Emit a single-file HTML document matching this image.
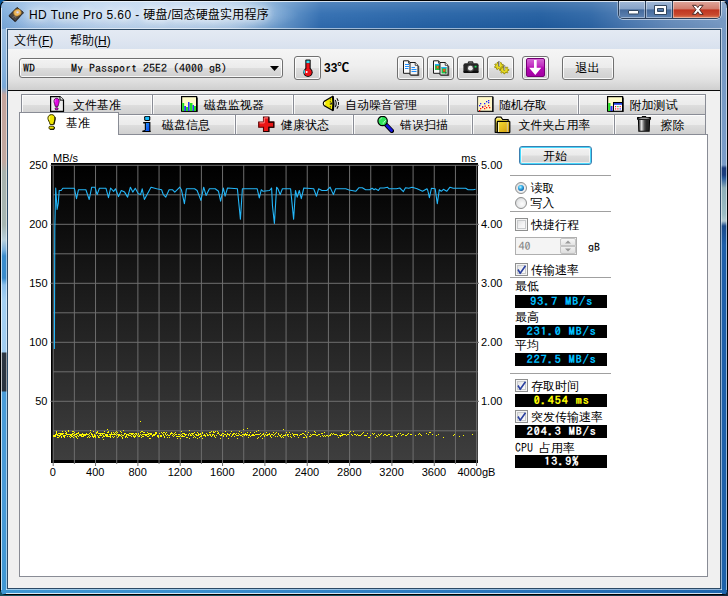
<!DOCTYPE html>
<html lang="zh-CN">
<head>
<meta charset="utf-8">
<title>HD Tune Pro 5.60 - 硬盘/固态硬盘实用程序</title>
<style>
*{box-sizing:border-box;margin:0;padding:0}
html,body{width:728px;height:596px;overflow:hidden}
body{position:relative;background:linear-gradient(90deg,#17505f 0,#17505f 60%,#14283c 100%);font-family:"Liberation Sans","Noto Sans CJK SC",sans-serif;font-size:12px;color:#000}
.abs{position:absolute}
#win{position:absolute;left:0;top:0;width:728px;height:595px;border-radius:7px 7px 6px 6px;overflow:hidden;background:#000}
/* frame glass pieces */
#ftop{position:absolute;left:1px;top:1px;width:726px;height:28px;border-radius:6px 6px 0 0;
 background:
  linear-gradient(90deg,rgba(200,222,244,0) 0,rgba(200,222,244,0) 100%),
  linear-gradient(90deg,#7aaadb 0,#98bde5 28px,#b0cdec 110px,#a9c8e8 230px,#6f9fd0 275px,#2f6cb0 320px,#2462a6 430px,#1f5c9f 540px,#2c65a5 590px,#4878b1 625px,#668dbc 670px,#7a9cc6 726px)}
#ftop:before{content:"";position:absolute;left:0;top:0;right:0;height:1px;background:rgba(255,255,255,.75)}
#ftopshade{position:absolute;left:1px;top:1px;width:726px;height:28px;border-radius:6px 6px 0 0;background:linear-gradient(180deg,rgba(255,255,255,.18) 0,rgba(255,255,255,.05) 45%,rgba(0,20,60,.06) 100%)}
#fleft{position:absolute;left:1px;top:29px;width:7px;height:559px;
 background:linear-gradient(180deg,#9dbfe2 0,#86b1dc 40px,#78a8d8 58px,#c4a49c 66px,#c0a8a0 133px,#a8b2ae 143px,#a6b6b2 196px,#b8d0dc 211px,#7ab0dc 221px,#3a8ccc 227px,#3a8ccc 249px,#8cc0ec 256px,#a4d0f2 271px,#a0ccf0 323px,#2c3642 324px,#2a3440 362px,#4a9cd8 363px,#4a9bd8 460px,#3f97d3 559px)}
#fright{position:absolute;left:720px;top:20px;width:7px;height:568px;
 background:linear-gradient(180deg,#7699c3 0,#7a9cc8 145px,#1a3a7a 148px,#1c3e80 155px,#2a5a9a 158px,#8eaeb8 168px,#9cbcc4 194px,#b0c8d0 201px,#1a4a8a 206px,#1f5faa 225px,#1f62aa 568px)}
#fbot{position:absolute;left:1px;top:588px;width:726px;height:6px;background:linear-gradient(90deg,#3f97d3 0,#3a8fce 200px,#2b79bf 450px,#1f65ad 726px)}
.hl{position:absolute;background:rgba(255,255,255,.7)}
#client{position:absolute;left:8px;top:30px;width:712px;height:558px;background:#f0f0f0}
#cborder{position:absolute;left:7px;top:29px;width:714px;height:560px;border:1px solid #2c4a66}
#title{position:absolute;left:29px;top:7px;height:16px;line-height:16px;font-size:12px;white-space:nowrap;color:#000;text-shadow:0 0 6px rgba(255,255,255,.9),0 0 10px rgba(255,255,255,.8),0 0 14px rgba(255,255,255,.6)}
#tglow{position:absolute;left:14px;top:1px;width:285px;height:28px;background:radial-gradient(ellipse 150px 22px at 135px 14px,rgba(226,238,250,.6) 0,rgba(214,230,247,.4) 60%,rgba(200,222,244,0) 100%)}
/* caption buttons */
#cap{position:absolute;left:618px;top:1px;width:103px;height:18px;border:1px solid #2b3f5a;border-top:none;border-radius:0 0 5px 5px;overflow:hidden;box-shadow:0 1px 0 rgba(255,255,255,.55),1px 0 0 rgba(255,255,255,.5),-1px 0 0 rgba(255,255,255,.35)}
#cap div{position:absolute;top:0;height:17px}
#bmin{left:0;width:27px;background:linear-gradient(180deg,#a3bad8 0,#86a2c7 47%,#456a9b 52%,#5f84b3 100%);border-right:1px solid #2b405c}
#bmax{left:27px;width:27px;background:linear-gradient(180deg,#a3bad8 0,#86a2c7 47%,#456a9b 52%,#5f84b3 100%);border-right:1px solid #2b405c}
#bclose{left:54px;width:47px;background:linear-gradient(180deg,#dfa89d 0,#d17d6d 47%,#bf3520 52%,#c8492e 82%,#dc8560 100%)}
#cap div:before{content:"";position:absolute;left:0;top:0;right:0;bottom:0;border:1px solid rgba(255,255,255,.4);border-top-color:rgba(255,255,255,.8)}
/* menu */
#menu{font-weight:350;position:absolute;left:0;top:0;width:712px;height:19px;background:linear-gradient(180deg,#e4eaf3 0,#dfe6f1 50%,#d8e1ee 100%)}
#menu span{position:absolute;top:4px;height:15px;line-height:15px;white-space:nowrap}
u{text-decoration:underline;text-underline-offset:1px}
#tbar{position:absolute;left:0;top:19px;width:712px;height:41px;background:linear-gradient(180deg,#f5f5f5 0,#efefef 40%,#e1e1e1 75%,#cfcfcf 100%)}
#tline{position:absolute;left:0;top:60px;width:712px;height:1px;background:#0a0a0a}
.btn{position:absolute;border:1px solid #707070;border-radius:3px;background:linear-gradient(180deg,#f2f2f2 0,#ebebeb 48%,#dddddd 52%,#cfcfcf 100%);box-shadow:inset 0 0 0 1px rgba(255,255,255,.85)}
.mono{-webkit-text-stroke:.1px currentColor;font-family:"IPAGothic","Liberation Mono",monospace;font-size:12px;line-height:14px;white-space:pre;transform:scaleY(.9);transform-origin:0 50%}
.cjk,.lbl{font-family:"Liberation Sans","WenQuanYi Zen Hei Sharp","WenQuanYi Zen Hei","Noto Sans CJK SC",sans-serif;font-size:12px;line-height:14px;white-space:nowrap}
/* tabs */
.tab{position:absolute;border:1px solid #898c95;border-bottom:none;background:linear-gradient(180deg,#f2f2f2 0,#ebebeb 48%,#dddddd 52%,#cfcfcf 100%);box-shadow:inset 1px 1px 0 rgba(255,255,255,.8)}
.tab span{position:absolute;white-space:nowrap;line-height:14px;font-size:12px}
.tab svg{position:absolute}
#pane{position:absolute;left:11px;top:104px;width:689px;height:443px;background:#fff;border:1px solid #898c95}
#seltab{position:absolute;left:11px;top:82px;width:100px;height:23px;background:#fff;border:1px solid #898c95;border-bottom:none}
.sep{position:absolute;left:502px;width:101px;height:1px;background:#a0a0a0}
.lbl{position:absolute;white-space:nowrap;font-size:12px;line-height:14px}
.box{position:absolute;left:507px;width:92px;height:13px;background:#000;overflow:hidden}
.box span{position:absolute;left:.7px;top:-2px;width:92px;height:14px;text-align:center;font-family:"IPAGothic","Liberation Mono",monospace;font-weight:bold;font-size:12px;line-height:14px;letter-spacing:1px;white-space:pre;transform:scaleY(.9);transform-origin:0 50%}
.chk{position:absolute;left:507px;width:13px;height:13px;border:1px solid #8e8f8f;background:linear-gradient(135deg,#d9dadb 0,#f4f4f5 55%,#fdfdfd 100%);box-shadow:inset 0 0 0 1px #f4f4f4,inset 0 0 0 2px #c8cacc}
.rdot{position:absolute;left:510px;width:6px;height:6px;border-radius:50%;background:radial-gradient(circle at 40% 35%,#c8f4ff 0,#35b4ec 35%,#14559b 75%,#0d3d78 100%)}
.radio{position:absolute;left:507px;width:12px;height:12px;border-radius:50%;border:1px solid #8e8f8f;background:radial-gradient(circle at 60% 60%,#fdfdfd 0,#e9eaeb 50%,#c9cbcd 100%)}
</style>
</head>
<body>
<div class="abs" style="left:0;top:0;width:10px;height:10px;background:#0b5aa0"></div>
<div class="abs" style="left:718px;top:0;width:10px;height:10px;background:#0a2a5a"></div>
<div id="win">
 <div id="ftop"></div><div id="tglow"></div><div id="ftopshade"></div>
 <div id="fleft"></div><div id="fright"></div><div id="fbot"></div>
 <div class="hl" style="left:1px;top:8px;width:1px;height:582px"></div>
 <div class="hl" style="left:726px;top:8px;width:1px;height:582px;background:rgba(255,255,255,.55)"></div>
 <div class="hl" style="left:6px;top:593px;width:716px;height:1px;background:rgba(255,255,255,.8)"></div>
 <div class="hl" style="left:6px;top:28px;width:716px;height:1px;background:rgba(255,255,255,.55)"></div>
 <div class="hl" style="left:6px;top:28px;width:1px;height:562px;background:rgba(255,255,255,.5)"></div>
 <div class="hl" style="left:721px;top:28px;width:1px;height:562px;background:rgba(255,255,255,.5)"></div>
 <div class="hl" style="left:6px;top:589px;width:716px;height:1px;background:rgba(255,255,255,.5)"></div>
 <div id="cborder"></div>
 <!-- app icon -->
 <svg class="abs" style="left:8px;top:6px" width="17" height="17" viewBox="0 0 17 17">
  <path d="M9 1.500L15.300 6.300L7.200 15.300L1 9.600z" fill="#4a4541" stroke="#26221f" stroke-width="1" stroke-linejoin="round"/>
  <path d="M1 9.600L7.200 15.300L7.400 16.300L.9 10.600z" fill="#1e1b19"/>
  <path d="M7.200 15.300L15.300 6.300L15.400 7.300L7.400 16.300z" fill="#35302c"/>
  <ellipse cx="9.400" cy="6.600" rx="3.900" ry="3.300" transform="rotate(-25 9.400 6.600)" fill="#f0b95a" stroke="#9a6a1c" stroke-width=".6"/>
  <ellipse cx="9.600" cy="6.300" rx="1.300" ry="1.100" fill="#e8e4f0" stroke="#b0a8c0" stroke-width=".4"/>
  <path d="M4.500 11.500l2.500-1.500 1 2" fill="none" stroke="#7a726c" stroke-width=".9"/>
 </svg>
 <div id="title"><span style="letter-spacing:.4px">HD Tune Pro 5.60 - </span><span style="letter-spacing:.2px">硬盘/固态硬盘实用程序</span></div>
 <div id="cap">
  <div id="bmin"></div><div id="bmax"></div><div id="bclose"></div>
  <svg class="abs" style="left:0;top:-1px" width="101" height="19" viewBox="0 0 101 19">
   <rect x="9.500" y="10.500" width="10" height="3.500" rx=".5" fill="#fff" stroke="#33475f" stroke-width="1"/>
   <path d="M35.500 5.500h12v9h-12zM38.500 8.500v3h6v-3z" fill="#fff" fill-rule="evenodd" stroke="#33475f" stroke-width="1" stroke-linejoin="round"/>
   <path d="M73.500 5.300h3.600l1.700 2.300 1.700-2.300h3.600l-3.500 4.400 3.500 4.600h-3.600l-1.700-2.500-1.700 2.500h-3.600l3.500-4.600z" fill="#fff" stroke="#4a2a26" stroke-width="1" stroke-linejoin="round"/>
  </svg>
 </div>

 <div id="client">
  <div id="menu">
   <span style="left:6px">文件(<u>F</u>)</span>
   <span style="left:62px">帮助(<u>H</u>)</span>
  </div>
  <div id="tbar"></div>
  <div id="tline"></div>
  <!-- combo -->
  <div class="abs" style="left:11px;top:28px;width:264px;height:20px;border:1px solid #707070;border-radius:3px;background:linear-gradient(180deg,#f2f2f2 0,#ebebeb 48%,#dddddd 52%,#cfcfcf 100%);box-shadow:inset 0 0 0 1px rgba(255,255,255,.85)"></div>
  <div class="abs mono" style="left:15px;top:30px">WD      My Passport 25E2 (4000 gB)</div>
  <svg class="abs" style="left:262px;top:36px" width="9" height="5" viewBox="0 0 9 5"><path d="M0 0h9L4.500 5z" fill="#000"/></svg>
  <!-- thermo button -->
  <div class="btn" style="left:286px;top:26px;width:27px;height:24px"></div>
  <svg class="abs" style="left:291px;top:29px" width="18" height="19" viewBox="0 0 18 19">
   <rect x="6.300" y=".6" width="5.400" height="13" rx="1" fill="#101010"/>
   <circle cx="9" cy="13.300" r="4.700" fill="#101010"/>
   <rect x="7.400" y="1.600" width="3.200" height="2.600" fill="#38dcf0"/>
   <rect x="7.400" y="4.200" width="3.200" height="8" fill="#ee1218"/>
   <circle cx="9" cy="13.300" r="3.600" fill="#ee1218"/>
   <path d="M5.300 11.200v3.200" stroke="#38dcf0" stroke-width="1.300"/>
   <circle cx="7.700" cy="12.900" r="1" fill="#fff"/>
  </svg>
  <div class="abs" style="left:316px;top:31px;font-weight:bold;font-size:12px;line-height:14px;white-space:nowrap">33℃</div>
  <!-- tool buttons -->
  <div class="btn" style="left:389px;top:26px;width:27px;height:24px"></div>
  <div class="btn" style="left:419px;top:26px;width:27px;height:24px"></div>
  <div class="btn" style="left:449px;top:26px;width:27px;height:24px"></div>
  <div class="btn" style="left:479px;top:26px;width:27px;height:24px"></div>
  <div class="btn" style="left:514px;top:26px;width:27px;height:24px"></div>
  <div class="btn" style="left:554px;top:26px;width:52px;height:24px"></div>
  <!-- copy text icon -->
  <svg class="abs" style="left:394px;top:30px" width="18" height="16" viewBox="0 0 18 16">
   <path d="M1.500.8h5l2.300 2.300v10.200H1.500z" fill="#fafafa" stroke="#1a1a1a" stroke-width="1"/>
   <path d="M6.500.8v2.400h2.300" fill="none" stroke="#1a1a1a" stroke-width=".8"/>
   <rect x="3" y="4" width="4" height="1" fill="#1e8fff"/><rect x="3" y="6" width="4" height="1" fill="#1e8fff"/><rect x="3" y="8" width="3.500" height="1" fill="#1e8fff"/>
   <path d="M8 2.500h5.200l2.800 2.800v9.700H8z" fill="#f2f2f2" stroke="#1a1a1a" stroke-width="1"/>
   <path d="M13.200 2.500v2.800H16" fill="#fff" stroke="#1a1a1a" stroke-width=".8"/>
   <path d="M16.700 6v9.700H9" fill="none" stroke="#3a3a3a" stroke-width="1"/>
   <rect x="9.500" y="7" width="3.500" height="1" fill="#1e8fff"/><rect x="9.500" y="9" width="5" height="1" fill="#1e8fff"/><rect x="9.500" y="11" width="5" height="1" fill="#1e8fff"/>
  </svg>
  <!-- copy image icon -->
  <svg class="abs" style="left:424px;top:30px" width="18" height="16" viewBox="0 0 18 16">
   <path d="M1.500.8h5l2.300 2.300v10.200H1.500z" fill="#fafafa" stroke="#1a1a1a" stroke-width="1"/>
   <path d="M6.500.8v2.400h2.300" fill="none" stroke="#1a1a1a" stroke-width=".8"/>
   <rect x="3" y="4" width="5" height="6" fill="#22c048"/><rect x="3" y="4" width="5" height="1.300" fill="#22a8ff"/><rect x="4.500" y="6" width="2.200" height="2.600" fill="#e83018"/><rect x="5" y="6.500" width="1" height="1" fill="#f0e020"/>
   <path d="M8 2.500h5.200l2.800 2.800v9.700H8z" fill="#f2f2f2" stroke="#1a1a1a" stroke-width="1"/>
   <path d="M13.200 2.500v2.800H16" fill="#fff" stroke="#1a1a1a" stroke-width=".8"/>
   <path d="M16.700 6v9.700H9" fill="none" stroke="#3a3a3a" stroke-width="1"/>
   <rect x="9.500" y="7" width="5" height="6.500" fill="#22c048"/><rect x="9.500" y="7" width="5" height="1.300" fill="#22a8ff"/><rect x="11" y="9" width="2.300" height="2.800" fill="#e83018"/><rect x="11.500" y="9.600" width="1" height="1" fill="#f0e020"/><rect x="13.300" y="12.300" width="1.200" height="1.200" fill="#222"/>
  </svg>
  <!-- camera icon -->
  <svg class="abs" style="left:454px;top:30px" width="18" height="16" viewBox="0 0 18 16">
   <path d="M5.300 3.500l1.200-2.300h4.200l1.200 2.300z" fill="#1c1c1c"/>
   <path d="M6.800 2.200h3.600" stroke="#8a8a8a" stroke-width=".8"/>
   <rect x="1.400" y="3.200" width="15.200" height="9.800" rx="2" fill="#262626"/>
   <rect x="1.400" y="10.800" width="15.200" height="2.200" rx="1" fill="#0e0e0e"/>
   <circle cx="8.400" cy="8.200" r="3.500" fill="#4a4a4a"/>
   <circle cx="8.400" cy="8.200" r="2.400" fill="#ececec"/>
   <rect x="12.600" y="5.800" width="1.900" height="1.700" fill="#1ee85e"/>
  </svg>
  <!-- options icon (gears) -->
  <svg class="abs" style="left:483px;top:30px" width="19" height="17" viewBox="0 0 19 17">
   <path d="M11.2 6.5L12.3 7.3L11.8 8.1L10.5 7.8L9.8 8.3L10.0 9.4L8.9 9.7L8.2 8.7L7.3 8.7L6.5 9.6L5.4 9.1L5.8 8.0L5.2 7.5L3.8 7.6L3.5 6.7L4.7 6.1L4.8 5.5L3.7 4.7L4.2 3.9L5.5 4.2L6.2 3.7L6.0 2.6L7.1 2.3L7.8 3.3L8.7 3.3L9.5 2.4L10.6 2.9L10.2 4.0L10.8 4.5L12.2 4.4L12.5 5.3L11.3 5.9z" fill="#e9dc1e" stroke="#8c8000" stroke-width=".8" stroke-linejoin="round"/>
   <path d="M16.2 11.3L17.0 12.3L16.2 12.9L15.0 12.3L14.2 12.6L14.0 13.7L12.8 13.8L12.5 12.6L11.7 12.4L10.5 13.0L9.7 12.4L10.5 11.4L10.1 10.8L8.7 10.5L8.7 9.6L10.1 9.3L10.4 8.7L9.6 7.7L10.4 7.1L11.6 7.7L12.4 7.4L12.6 6.3L13.8 6.2L14.1 7.4L14.9 7.6L16.1 7.0L16.9 7.6L16.1 8.6L16.5 9.2L17.9 9.5L17.9 10.4L16.5 10.7z" fill="#e9dc1e" stroke="#8c8000" stroke-width=".8" stroke-linejoin="round"/>
   <path d="M8 1.200v5.300M13.300 5.200v5.300" stroke="#5c5c5c" stroke-width="1.700"/>
   <path d="M8.400 1.500v4.500M13.700 5.500v4.500" stroke="#e6e6e6" stroke-width=".7"/>
  </svg>
  <!-- save (purple arrow) -->
  <div class="abs" style="left:518px;top:28px;width:19px;height:19px;border-radius:2px;background:linear-gradient(180deg,#d468d4 0,#c230c2 40%,#b208b2 52%,#a400a4 100%);border:1px solid #740074"></div>
  <svg class="abs" style="left:518px;top:28px" width="19" height="19" viewBox="0 0 19 19"><path d="M8 2h2.700v8.500H8zM3.100 9.700h12.200L9.300 16.900z" fill="#fff"/></svg>
  <div class="abs cjk" style="left:567.500px;top:31px">退出</div>
  <!-- tab row 1 : abs x21..706, y94..114 -->
  <div class="tab" style="left:13px;top:64px;width:685px;height:21px;border-right:1px solid #898c95"></div>
  <!-- tab row 2 : abs x21..706, y114..134 -->
  <div class="tab" style="left:13px;top:84px;width:685px;height:21px;border-right:1px solid #898c95"></div>
  <!-- dividers row1 (abs 152,293,448,578) -->
  <div class="abs" style="left:144px;top:65px;width:1px;height:19px;background:#898c95;box-shadow:-1px 0 0 rgba(255,255,255,.8),1px 0 0 rgba(255,255,255,.8)"></div>
  <div class="abs" style="left:285px;top:65px;width:1px;height:19px;background:#898c95;box-shadow:-1px 0 0 rgba(255,255,255,.8),1px 0 0 rgba(255,255,255,.8)"></div>
  <div class="abs" style="left:440px;top:65px;width:1px;height:19px;background:#898c95;box-shadow:-1px 0 0 rgba(255,255,255,.8),1px 0 0 rgba(255,255,255,.8)"></div>
  <div class="abs" style="left:570px;top:65px;width:1px;height:19px;background:#898c95;box-shadow:-1px 0 0 rgba(255,255,255,.8),1px 0 0 rgba(255,255,255,.8)"></div>
  <!-- dividers row2 (abs 235,353,472,614) -->
  <div class="abs" style="left:227px;top:85px;width:1px;height:19px;background:#898c95;box-shadow:-1px 0 0 rgba(255,255,255,.8),1px 0 0 rgba(255,255,255,.8)"></div>
  <div class="abs" style="left:345px;top:85px;width:1px;height:19px;background:#898c95;box-shadow:-1px 0 0 rgba(255,255,255,.8),1px 0 0 rgba(255,255,255,.8)"></div>
  <div class="abs" style="left:464px;top:85px;width:1px;height:19px;background:#898c95;box-shadow:-1px 0 0 rgba(255,255,255,.8),1px 0 0 rgba(255,255,255,.8)"></div>
  <div class="abs" style="left:606px;top:85px;width:1px;height:19px;background:#898c95;box-shadow:-1px 0 0 rgba(255,255,255,.8),1px 0 0 rgba(255,255,255,.8)"></div>
  <!-- row1 labels -->
  <div class="abs cjk" style="left:65px;top:68px">文件基准</div>
  <div class="abs cjk" style="left:196px;top:68px">磁盘监视器</div>
  <div class="abs cjk" style="left:337px;top:68px">自动噪音管理</div>
  <div class="abs cjk" style="left:491px;top:68px">随机存取</div>
  <div class="abs cjk" style="left:621.5px;top:68px">附加测试</div>
  <!-- row2 labels -->
  <div class="abs cjk" style="left:154px;top:88px">磁盘信息</div>
  <div class="abs cjk" style="left:273px;top:88px">健康状态</div>
  <div class="abs cjk" style="left:392px;top:88px">错误扫描</div>
  <div class="abs cjk" style="left:510.5px;top:88px">文件夹占用率</div>
  <div class="abs cjk" style="left:652.5px;top:88px">擦除</div>
  <!-- row1 icons -->
  <!-- file benchmark (abs 49,96) -->
  <svg class="abs" style="left:41px;top:66px" width="16" height="16" viewBox="0 0 16 16">
   <path d="M1.600.6h9.400l3.500 3.500v11.300H1.600z" fill="#eeeeee" stroke="#000" stroke-width="1.200"/>
   <path d="M11 .6v3.500h3.500" fill="#fff" stroke="#000" stroke-width="1"/>
   <path d="M7.600 2.300c1.700 0 2.600 1.300 2.600 2.900 0 1.500-.8 2.800-1.200 5.200H6.200C5.800 8 5 6.700 5 5.200c0-1.600.9-2.900 2.600-2.900z" fill="#e408e4" stroke="#380038" stroke-width=".8"/>
   <path d="M6.500 3.500c-.6.800-.6 1.800-.2 2.700" fill="none" stroke="#ff9cff" stroke-width=".7"/>
   <rect x="6.200" y="11.700" width="2.900" height="2.100" rx=".9" fill="#e408e4" stroke="#380038" stroke-width=".8"/>
  </svg>
  <!-- disk monitor (abs 181,96) -->
  <svg class="abs" style="left:173px;top:66px" width="17" height="16" viewBox="0 0 17 16">
   <rect x=".6" y=".6" width="15" height="14.600" fill="#fffcc8" stroke="#000" stroke-width="1.200"/>
   <path d="M16.200 1.500v14.300H1.500" fill="none" stroke="#000" stroke-width="1"/>
   <path d="M1.200 7h2v8h-2zM5 11h2v4H5zM8.500 7h3v8h-3zM13 10h2v5h-2z" fill="#20e020"/>
   <path d="M3.200 10h1.800v5H3.200zM7 6h1.500v9H7zM11.500 9H13v6h-1.500z" fill="#3030ff"/>
  </svg>
  <!-- speaker (abs 322,95) -->
  <svg class="abs" style="left:314px;top:65px" width="18" height="17" viewBox="0 0 18 17">
   <path d="M2.300 6.300L10.800 1.300Q11.900 8.500 10.800 15.500L2.300 10.700Q.5 8.500 2.300 6.300z" fill="#f2ea00" stroke="#000" stroke-width="1.300" stroke-linejoin="round"/>
   <path d="M10.900 1.300Q12.200 8.500 10.900 15.500" fill="none" stroke="#000" stroke-width="1.900"/>
   <path d="M8.300 3.200v11" stroke="#5a5600" stroke-width="1" stroke-dasharray="1.600 1"/>
   <circle cx="9.400" cy="8.500" r=".95" fill="#222"/>
   <ellipse cx="2.700" cy="8.500" rx=".8" ry="1.400" fill="#fffbb0"/>
   <path d="M13.200 5Q15.300 8.500 13.200 12" fill="none" stroke="#111" stroke-width="1.100"/>
   <path d="M14.800 3.200Q18.300 8.500 14.800 13.800" fill="none" stroke="#111" stroke-width="1.100" stroke-dasharray="3 1"/>
  </svg>
  <!-- random access (abs 477,96) -->
  <svg class="abs" style="left:469px;top:66px" width="17" height="16" viewBox="0 0 17 16">
   <rect x=".6" y=".6" width="15" height="14.600" fill="#fff8c8" stroke="#3a3a3a" stroke-width="1"/>
   <path d="M16 .8v15H.8" fill="none" stroke="#000" stroke-width="1.200"/>
   <g fill="#2020ff"><rect x="3" y="7" width="1.300" height="1.300"/><rect x="2" y="9" width="1.300" height="1.300"/><rect x="5" y="10" width="1.300" height="1.300"/><rect x="7" y="7" width="1.300" height="1.300"/><rect x="9" y="5" width="1.300" height="1.300"/><rect x="11" y="4" width="1.300" height="1.300"/><rect x="11" y="6" width="1.300" height="1.300"/></g>
   <g fill="#ff1010"><rect x="2" y="14" width="1.300" height="1.300"/><rect x="3" y="12" width="1.300" height="1.300"/><rect x="5" y="10.800" width="1.300" height="1.300"/><rect x="7" y="12" width="1.300" height="1.300"/><rect x="7.500" y="9.500" width="1.300" height="1.300"/><rect x="9" y="11" width="1.300" height="1.300"/><rect x="11" y="9" width="1.300" height="1.300"/><rect x="12" y="11" width="1.300" height="1.300"/></g>
  </svg>
  <!-- extra tests (abs 607,96) -->
  <svg class="abs" style="left:599px;top:66px" width="17" height="16" viewBox="0 0 17 16">
   <rect x=".6" y=".6" width="15" height="14.600" fill="#fffcc8" stroke="#000" stroke-width="1.200"/>
   <path d="M16.200 1.500v14.300H1.500" fill="none" stroke="#000" stroke-width="1"/>
   <rect x="1.200" y="7" width="2.300" height="8" fill="#20e020"/><rect x="3.500" y="10" width="2" height="5" fill="#3030ff"/>
   <rect x="6.500" y="6.500" width="9" height="8.700" fill="#fff" stroke="#000" stroke-width="1"/>
   <rect x="7" y="7" width="8" height="1.800" fill="#2040e0"/>
   <g><rect x="8" y="10" width="1.200" height="1.200" fill="#ff1010"/><rect x="10.300" y="10" width="1.200" height="1.200" fill="#10c010"/><rect x="12.600" y="10" width="1.200" height="1.200" fill="#ff1010"/><rect x="8" y="12.300" width="1.200" height="1.200" fill="#ff1010"/><rect x="10.300" y="12.300" width="1.200" height="1.200" fill="#ff1010"/><rect x="12.600" y="12.300" width="1.200" height="1.200" fill="#2020ff"/></g>
  </svg>
  <!-- row2 icons -->
  <!-- info (abs 142,115) -->
  <svg class="abs" style="left:134px;top:85px" width="10" height="18" viewBox="0 0 10 18">
   <defs><linearGradient id="ig" x1="0" y1="0" x2="1" y2="1"><stop offset="0" stop-color="#2298ff"/><stop offset="1" stop-color="#0848ee"/></linearGradient></defs>
   <rect x="2.200" y=".9" width="6.100" height="5" rx="1.300" fill="#000"/>
   <rect x="3.200" y="1.800" width="4" height="3.100" rx=".6" fill="#1cbcfa"/>
   <path d="M1.200 6.900H8.400V15.300L8.900 16.900H.3V15.700L2.800 14.900V8.500H1.200z" fill="#000"/>
   <path d="M3.900 8H7.300V15.900H2.300L3.900 15.200z" fill="url(#ig)"/>
  </svg>
  <!-- health cross (abs 258,116) -->
  <svg class="abs" style="left:250px;top:86px" width="17" height="16" viewBox="0 0 17 16">
   <path d="M5.500 1h5.300v5h5v5.300h-5v4.300H5.500v-4.300H.7V6h4.800z" fill="#ea1616" stroke="#5a0000" stroke-width="1.100" stroke-linejoin="miter"/>
   <path d="M10.900 1.200v4.900h4.900v5.200h-4.900v4.200H5.600" fill="none" stroke="#1a0000" stroke-width="1.100"/>
   <path d="M6.300 1.900h3.800M1.500 6.900h4.700V2" fill="none" stroke="#ff8a8a" stroke-width="1"/>
  </svg>
  <!-- error scan magnifier (abs 377,116) -->
  <svg class="abs" style="left:369px;top:86px" width="17" height="17" viewBox="0 0 17 17">
   <path d="M9.300 8.900l5.600 6" stroke="#000" stroke-width="4.400" stroke-linecap="round"/>
   <path d="M9.300 8.900l5.300 5.600" stroke="#1414dc" stroke-width="2.700" stroke-linecap="round"/>
   <circle cx="5.600" cy="5" r="4.700" fill="#2ee45a" stroke="#000" stroke-width="1.200"/>
   <path d="M2.700 3.600l2.100-1.800" stroke="#c8ffd4" stroke-width="1" stroke-dasharray="1.200 .6"/>
   <path d="M5.800 7.400l3-3" stroke="#d8ffe0" stroke-width="1.100" stroke-dasharray="1.200 .6"/>
  </svg>
  <!-- folder (abs 494,115) -->
  <svg class="abs" style="left:486px;top:85.500px" width="17" height="18" viewBox="0 0 17 18">
   <defs><linearGradient id="fg" x1="0" y1="0" x2="1" y2="1"><stop offset="0" stop-color="#f4e038"/><stop offset=".5" stop-color="#e4bc20"/><stop offset="1" stop-color="#d09a0c"/></linearGradient></defs>
   <path d="M1.200 16.300V3.200L2.800 1.200H7L8.600 3.500H14.200V7H3.300V16.300z" fill="#f8e244" stroke="#000" stroke-width="1.200" stroke-linejoin="round"/>
   <path d="M2.400 3.400L3.200 2.300H6.500L7.700 4.300" fill="none" stroke="#fffac0" stroke-width=".8"/>
   <rect x="3.300" y="5.300" width="12.500" height="11.400" rx=".6" fill="url(#fg)" stroke="#000" stroke-width="1.200"/>
   <path d="M4.500 6.200V16" stroke="#fffbc4" stroke-width=".9"/>
   <path d="M13.300 6V16" stroke="#d6d2c0" stroke-width=".8"/>
  </svg>
  <!-- trash (abs 636,115) -->
  <svg class="abs" style="left:628px;top:85px" width="16" height="18" viewBox="0 0 16 18">
   <defs><linearGradient id="tg" x1="0" y1="0" x2="1" y2="0"><stop offset="0" stop-color="#808080"/><stop offset=".2" stop-color="#b4b4b4"/><stop offset=".27" stop-color="#ffffff"/><stop offset=".36" stop-color="#a2a2a2"/><stop offset=".58" stop-color="#484848"/><stop offset=".82" stop-color="#1e1e1e"/><stop offset="1" stop-color="#3a3a3a"/></linearGradient></defs>
   <rect x="5.800" y="1" width="4.400" height="1.800" rx=".5" fill="#000"/>
   <rect x="1" y="1.900" width="14" height="2.900" rx=".5" fill="#000"/>
   <ellipse cx="8" cy="3.300" rx="5.800" ry=".8" fill="#9c9c9c"/>
   <path d="M1.900 4.600h12.200l-.4 12.200H2.300z" fill="#000"/>
   <path d="M3.200 5h9.600l-.3 10.700H3.500z" fill="url(#tg)"/>
  </svg>
  <div id="pane"></div>
  <div id="seltab"></div>
  <!-- selected tab content -->
  <svg class="abs" style="left:39px;top:84px" width="10" height="16" viewBox="0 0 10 16">
   <path d="M4.500.6c2.200 0 3.500 1.600 3.500 3.700 0 2-.9 3.600-1.300 6.200H3.100C2.700 7.900.9 6.300.9 4.300.9 2.200 2.300.6 4.500.6z" fill="#eee400" stroke="#3a3600" stroke-width="1"/>
   <path d="M8 3.200c.7 2.400-.6 4.200-1 7.300" fill="none" stroke="#1a1800" stroke-width="1.100"/>
   <path d="M3 2.200c-.9 1-.9 2.400-.3 3.600" fill="none" stroke="#ffffa0" stroke-width=".9"/>
   <rect x="2" y="12.200" width="5.200" height="3" rx="1.200" fill="#eee400" stroke="#3a3600" stroke-width="1"/>
   <path d="M3 15.400h4c.5-.4.600-1.400.400-2.400" fill="none" stroke="#1a1800" stroke-width="1"/>
  </svg>
  <div class="abs cjk" style="left:58px;top:86px">基准</div>
  <svg class="abs" style="left:12px;top:110px" width="500" height="350" viewBox="20 140 500 350" font-family="'Liberation Sans',sans-serif" font-size="11px">
  <defs><linearGradient id="pg" x1="0" y1="0" x2="0" y2="1"><stop offset="0" stop-color="#000"/><stop offset="1" stop-color="#3e3e3e"/></linearGradient></defs>
  <rect x="51" y="163" width="427" height="300" fill="#000"/>
  <rect x="53" y="165" width="425" height="295" fill="url(#pg)"/>
  <path d="M53.20 165V460M74.37 165V460M95.54 165V460M116.71 165V460M137.88 165V460M159.05 165V460M180.22 165V460M201.39 165V460M222.56 165V460M243.73 165V460M264.90 165V460M286.07 165V460M307.24 165V460M328.41 165V460M349.58 165V460M370.75 165V460M391.92 165V460M413.09 165V460M434.26 165V460M455.43 165V460M476.60 165V460M53 165.30H477.7M53 194.80H477.7M53 224.30H477.7M53 253.80H477.7M53 283.30H477.7M53 312.80H477.7M53 342.30H477.7M53 371.80H477.7M53 401.30H477.7M53 430.80H477.7" stroke="#6e6e6e" stroke-width="1" fill="none"/>
  <path d="M50.500 165.30H53M477 165.30H479M50.500 224.30H53M477 224.30H479M50.500 283.30H53M477 283.30H479M50.500 342.30H53M477 342.30H479M50.500 401.30H53M477 401.30H479M53.20 460V466M74.37 460V464M95.54 460V466M116.71 460V464M137.88 460V466M159.05 460V464M180.22 460V466M201.39 460V464M222.56 460V466M243.73 460V464M264.90 460V466M286.07 460V464M307.24 460V466M328.41 460V464M349.58 460V466M370.75 460V464M391.92 460V466M413.09 460V464M434.26 460V466M455.43 460V464M476.60 460V466" stroke="#707070" stroke-width="1" fill="none"/>
  <path d="M53 435h1M53 436h1M54 435h1M54 436h1M55 434h1M55 435h1M55 436h1M56 431h1M56 432h1M56 433h1M56 434h1M57 434h1M57 435h1M57 437h1M58 433h1M58 435h1M58 437h1M59 433h1M59 435h1M59 436h1M60 433h1M60 434h1M60 435h1M61 433h1M61 434h1M61 436h1M61 437h1M62 431h1M62 433h1M62 434h1M63 433h1M63 435h1M63 436h1M64 435h1M64 436h1M64 437h1M65 431h1M65 433h1M65 435h1M66 432h1M66 433h1M66 434h1M67 434h1M67 436h1M68 430h1M68 431h1M68 434h1M69 434h1M69 436h1M70 434h1M70 435h1M70 437h1M71 434h1M71 435h1M71 436h1M72 431h1M72 433h1M72 434h1M72 436h1M73 431h1M73 433h1M73 435h1M73 437h1M74 432h1M74 434h1M74 435h1M75 434h1M75 436h1M76 433h1M76 434h1M76 436h1M76 437h1M77 433h1M77 435h1M77 438h1M78 432h1M78 433h1M78 436h1M79 434h1M79 435h1M80 434h1M80 435h1M81 434h1M81 435h1M81 436h1M82 433h1M82 434h1M82 436h1M83 434h1M83 435h1M83 436h1M84 434h1M84 435h1M85 434h1M85 435h1M86 433h1M86 434h1M87 434h1M87 437h1M88 434h1M88 436h1M89 433h1M89 435h1M89 437h1M90 430h1M90 432h1M90 436h1M91 433h1M91 434h1M92 434h1M92 435h1M92 436h1M93 431h1M93 436h1M93 437h1M94 434h1M94 435h1M94 436h1M95 435h1M95 436h1M95 437h1M96 432h1M96 433h1M97 431h1M97 432h1M97 435h1M98 433h1M98 436h1M98 437h1M99 433h1M99 435h1M99 437h1M100 433h1M100 434h1M100 435h1M101 433h1M101 435h1M102 433h1M102 434h1M102 437h1M103 433h1M103 435h1M103 436h1M103 439h1M104 431h1M104 433h1M104 436h1M105 434h1M105 435h1M106 434h1M106 435h1M106 436h1M107 429h1M107 432h1M107 434h1M107 435h1M107 436h1M108 431h1M108 432h1M108 436h1M109 434h1M109 436h1M110 434h1M110 435h1M110 436h1M110 437h1M111 432h1M111 433h1M111 434h1M112 434h1M112 436h1M113 432h1M113 434h1M113 437h1M114 433h1M114 434h1M114 436h1M115 432h1M115 434h1M116 431h1M116 433h1M116 435h1M117 432h1M117 434h1M117 437h1M118 434h1M118 435h1M118 436h1M119 434h1M119 435h1M120 431h1M120 435h1M121 432h1M121 434h1M121 436h1M122 435h1M122 437h1M122 438h1M123 430h1M123 435h1M124 433h1M124 434h1M125 433h1M125 436h1M125 437h1M126 434h1M126 435h1M126 436h1M127 434h1M127 437h1M128 434h1M128 435h1M129 433h1M129 435h1M130 433h1M130 435h1M131 433h1M131 434h1M131 436h1M132 433h1M132 434h1M133 433h1M133 435h1M133 436h1M134 434h1M134 436h1M134 437h1M135 433h1M135 435h1M135 436h1M136 433h1M136 434h1M137 435h1M138 433h1M138 434h1M138 436h1M139 435h1M139 436h1M140 421h1M140 432h1M140 434h1M141 431h1M141 435h1M141 437h1M142 431h1M142 434h1M142 436h1M143 432h1M143 434h1M143 436h1M144 432h1M144 434h1M145 434h1M145 435h1M146 434h1M146 435h1M147 432h1M147 434h1M147 436h1M148 433h1M148 434h1M148 436h1M149 433h1M149 435h1M149 438h1M150 433h1M150 434h1M150 438h1M151 433h1M151 434h1M152 435h1M152 436h1M153 434h1M153 435h1M154 434h1M154 435h1M155 432h1M155 433h1M155 434h1M156 432h1M156 433h1M157 435h1M157 436h1M158 435h1M158 436h1M158 437h1M159 433h1M160 435h1M160 436h1M161 432h1M161 435h1M161 436h1M162 433h1M163 432h1M163 434h1M163 435h1M164 432h1M164 436h1M164 437h1M165 433h1M165 434h1M166 432h1M166 435h1M167 434h1M167 437h1M168 435h1M169 435h1M169 437h1M170 433h1M170 434h1M171 432h1M171 433h1M172 433h1M172 435h1M173 434h1M173 436h1M174 433h1M174 435h1M175 432h1M175 434h1M176 434h1M176 436h1M177 436h1M177 438h1M178 434h1M178 436h1M179 434h1M179 436h1M180 435h1M180 438h1M181 431h1M181 434h1M181 436h1M182 433h1M182 435h1M182 436h1M183 433h1M183 436h1M184 433h1M184 434h1M184 436h1M185 434h1M185 435h1M186 434h1M186 437h1M187 437h1M188 434h1M188 435h1M189 430h1M189 433h1M189 438h1M190 434h1M190 435h1M191 433h1M191 435h1M192 433h1M192 434h1M193 433h1M193 435h1M193 437h1M194 432h1M194 436h1M195 434h1M195 437h1M196 434h1M196 435h1M197 432h1M197 435h1M197 438h1M198 433h1M198 434h1M198 435h1M199 434h1M199 437h1M200 433h1M200 434h1M200 436h1M201 435h1M201 436h1M202 432h1M202 433h1M202 438h1M203 435h1M204 434h1M204 435h1M205 435h1M205 436h1M206 433h1M207 434h1M207 435h1M208 435h1M209 432h1M209 434h1M210 432h1M210 434h1M210 435h1M211 431h1M211 436h1M212 434h1M212 435h1M213 431h1M213 432h1M213 434h1M214 432h1M214 435h1M214 436h1M215 431h1M215 437h1M216 435h1M217 431h1M217 433h1M218 432h1M218 433h1M219 434h1M220 435h1M220 438h1M221 434h1M221 435h1M222 433h1M223 433h1M223 435h1M223 436h1M224 434h1M225 431h1M225 434h1M226 435h1M226 436h1M227 433h1M227 434h1M228 434h1M228 438h1M229 434h1M229 435h1M230 433h1M231 431h1M231 436h1M232 434h1M232 435h1M233 433h1M233 434h1M234 433h1M234 436h1M235 434h1M236 433h1M236 435h1M237 435h1M237 438h1M238 433h1M238 435h1M239 431h1M239 434h1M240 435h1M241 432h1M241 435h1M242 434h1M242 436h1M243 429h1M243 434h1M244 434h1M244 435h1M245 433h1M245 434h1M246 434h1M246 435h1M247 428h1M247 432h1M247 434h1M248 435h1M248 437h1M249 434h1M249 435h1M250 432h1M250 436h1M251 435h1M252 434h1M252 435h1M253 434h1M253 435h1M254 432h1M254 435h1M255 434h1M256 431h1M256 434h1M257 434h1M257 438h1M258 430h1M258 434h1M258 437h1M259 434h1M260 433h1M260 436h1M261 435h1M262 434h1M262 438h1M263 433h1M263 434h1M264 435h1M264 436h1M265 434h1M266 432h1M266 435h1M267 434h1M267 435h1M268 434h1M269 433h1M269 434h1M270 435h1M270 436h1M271 434h1M271 437h1M272 434h1M273 432h1M273 435h1M274 434h1M275 433h1M275 436h1M276 432h1M277 436h1M278 433h1M278 434h1M279 435h1M280 435h1M280 436h1M281 434h1M281 437h1M282 436h1M283 429h1M283 435h1M283 437h1M284 435h1M285 434h1M285 435h1M286 432h1M287 434h1M287 435h1M288 434h1M288 436h1M289 432h1M290 434h1M290 436h1M291 437h1M292 433h1M293 434h1M293 435h1M294 434h1M294 436h1M295 434h1M296 434h1M297 434h1M297 435h1M298 437h1M299 435h1M300 434h1M301 434h1M302 433h1M303 433h1M303 437h1M304 434h1M304 437h1M305 431h1M305 435h1M306 436h1M306 437h1M307 434h1M308 432h1M309 436h1M310 434h1M310 436h1M311 435h1M312 434h1M313 434h1M314 431h1M314 434h1M315 432h1M315 434h1M316 435h1M317 435h1M318 434h1M319 434h1M320 436h1M321 433h1M322 433h1M322 435h1M323 436h1M324 432h1M324 435h1M325 436h1M326 435h1M327 435h1M328 436h1M329 435h1M330 434h1M330 435h1M331 433h1M332 434h1M333 433h1M334 434h1M335 434h1M336 434h1M337 435h1M338 437h1M339 435h1M340 435h1M340 436h1M341 433h1M341 435h1M342 434h1M342 435h1M343 434h1M344 434h1M345 434h1M346 435h1M347 434h1M348 434h1M349 432h1M350 431h1M351 434h1M352 435h1M353 431h1M354 434h1M355 434h1M356 435h1M357 434h1M358 435h1M359 435h1M360 435h1M361 434h1M362 433h1M363 432h1M364 435h1M365 435h1M366 435h1M367 433h1M368 437h1M369 437h1M370 435h1M372 433h1M373 434h1M374 433h1M375 437h1M376 435h1M377 436h1M378 434h1M379 435h1M380 434h1M381 433h1M383 435h1M384 434h1M385 434h1M386 435h1M387 435h1M388 434h1M389 434h1M390 436h1M391 436h1M392 436h1M395 435h1M396 436h1M397 434h1M398 433h1M400 433h1M401 435h1M402 434h1M403 434h1M405 435h1M406 435h1M407 434h1M408 433h1M410 434h1M411 434h1M415 435h1M418 434h1M419 433h1M420 434h1M421 435h1M426 433h1M428 434h1M429 432h1M430 432h1M432 434h1M436 435h1M438 434h1M443 437h1M453 435h1M454 434h1M459 436h1M463 435h1M472 434h1" stroke="#fcf800" stroke-width="1" fill="none" shape-rendering="crispEdges" transform="translate(0,.5)"/>
  <polyline points="54.4,349.0 54.8,229.0 55.7,188.0 57.1,209.4 58.2,203.7 59.2,190.5 61.2,190.5 62.8,188.3 74.4,188.3 76.5,198.7 78.5,189.7 85.9,189.7 89.2,199.5 91.7,187.2 95.0,187.2 97.1,194.6 99.4,188.3 106.0,188.3 108.5,197.6 110.6,188.0 113.6,191.3 115.5,188.8 118.5,196.6 121.3,190.5 124.6,192.1 127.6,197.1 130.4,187.2 132.8,192.1 135.3,188.3 138.3,193.8 140.6,194.6 142.2,188.8 144.4,199.5 151.0,187.2 156.7,188.8 161.6,189.7 163.3,194.6 165.8,197.1 169.1,189.7 172.4,189.7 174.8,192.1 179.8,187.2 181.4,189.7 184.4,203.7 186.4,188.8 194.6,188.8 197.1,190.5 200.9,200.4 203.7,187.2 206.1,195.4 209.4,188.8 215.2,188.8 218.5,191.3 220.6,201.2 223.4,188.0 225.1,196.2 227.5,188.0 237.4,188.8 240.4,219.3 242.4,188.8 257.2,188.8 259.3,197.9 261.3,189.7 263.0,191.3 269.6,190.5 271.6,188.0 272.5,206.1 274.4,223.4 276.6,187.2 277.9,188.8 280.2,194.6 282.4,188.8 290.6,188.8 293.6,219.3 295.5,190.5 297.2,197.1 299.3,190.5 301.3,198.7 303.8,188.0 313.7,188.8 316.5,196.2 318.6,188.8 321.9,190.5 326.8,190.5 330.1,187.2 333.4,194.6 335.6,188.8 345.8,188.8 349.1,190.0 355.7,191.3 359.0,187.7 362.3,187.7 365.6,189.7 369.7,189.7 372.1,188.3 374.1,189.7 375.4,188.8 378.4,190.5 380.0,188.0 384.1,188.0 387.4,187.2 389.1,188.8 396.5,188.8 399.8,188.0 403.4,191.6 405.5,187.7 408.8,188.3 412.1,187.2 417.1,188.8 422.5,191.3 427.0,188.8 427.8,190.5 429.4,197.6 431.4,188.3 435.2,188.8 437.3,203.7 439.3,189.7 441.3,191.3 443.4,189.3 446.7,191.3 450.0,187.2 453.3,188.3 465.7,188.3 468.1,189.7 473.1,189.7 475.6,189.3" fill="none" stroke="#24b6f8" stroke-width="1.100" stroke-linejoin="round"/>
  <text x="47.500" y="169.0" text-anchor="end">250</text>
  <text x="47.500" y="228.0" text-anchor="end">200</text>
  <text x="47.500" y="287.0" text-anchor="end">150</text>
  <text x="47.500" y="346.0" text-anchor="end">100</text>
  <text x="47.500" y="405.0" text-anchor="end">50</text>
  <text x="481" y="169.0">5.00</text>
  <text x="481" y="228.0">4.00</text>
  <text x="481" y="287.0">3.00</text>
  <text x="481" y="346.0">2.00</text>
  <text x="481" y="405.0">1.00</text>
  <text x="53" y="162">MB/s</text>
  <text x="476" y="162" text-anchor="end">ms</text>
  <text x="52.9" y="476" text-anchor="middle">0</text>
  <text x="95.2" y="476" text-anchor="middle">400</text>
  <text x="137.6" y="476" text-anchor="middle">800</text>
  <text x="179.9" y="476" text-anchor="middle">1200</text>
  <text x="222.3" y="476" text-anchor="middle">1600</text>
  <text x="264.6" y="476" text-anchor="middle">2000</text>
  <text x="306.9" y="476" text-anchor="middle">2400</text>
  <text x="349.3" y="476" text-anchor="middle">2800</text>
  <text x="391.6" y="476" text-anchor="middle">3200</text>
  <text x="434.0" y="476" text-anchor="middle">3600</text>
  <text x="457.500" y="476">4000gB</text>
  </svg>
  <!-- start button abs 519..592 x 146..165 -->
  <div class="abs" style="left:511px;top:116px;width:73px;height:19px;border:1px solid #3c7fb1;border-radius:3px;background:linear-gradient(180deg,#f2f2f2 0,#ebebeb 48%,#dddddd 52%,#cfcfcf 100%);box-shadow:inset 0 0 0 1px #48d8fb,inset 0 0 0 2px rgba(255,255,255,.6)"></div>
  <div class="abs cjk" style="left:535px;top:118.500px">开始</div>
  <div class="sep" style="top:145px"></div>
  <!-- radios -->
  <div class="radio" style="top:152px"></div>
  <div class="rdot" style="top:155px"></div>
  <div class="radio" style="top:167px"></div>
  <div class="lbl" style="left:522.500px;top:151px">读取</div>
  <div class="lbl" style="left:522.500px;top:166px">写入</div>
  <div class="sep" style="top:181px"></div>
  <div class="chk" style="top:188px"></div>
  <div class="lbl" style="left:523px;top:188px">快捷行程</div>
  <!-- spinner -->
  <div class="abs" style="left:507px;top:207px;width:62px;height:18px;border:1px solid #afafaf;background:#f4f4f4"></div>
  <div class="abs mono" style="left:510.500px;top:209px;color:#838383">40</div>
  <div class="abs" style="left:552px;top:208px;width:16px;height:8px;border:1px solid #c4c4c4;border-radius:2px 2px 0 0;background:linear-gradient(180deg,#f6f6f6,#e4e4e4)"></div>
  <div class="abs" style="left:552px;top:216px;width:16px;height:8px;border:1px solid #c4c4c4;border-radius:0 0 2px 2px;background:linear-gradient(180deg,#f0f0f0,#dedede)"></div>
  <svg class="abs" style="left:557px;top:210px" width="6" height="12" viewBox="0 0 6 12"><path d="M0 3.500L3 .5l3 3zM0 8.500l3 3 3-3z" fill="#9a9a9a"/></svg>
  <div class="abs mono" style="left:580px;top:210px">gB</div>
  <div class="chk" style="top:233px"></div>
  <svg class="abs" style="left:509px;top:235px" width="10" height="10" viewBox="0 0 10 10"><path d="M1 4.500l2.200 3.800L8.500.8" fill="none" stroke="#2a40a0" stroke-width="1.600" stroke-linejoin="round"/></svg>
  <div class="lbl" style="left:523px;top:233px">传输速率</div>
  <div class="sep" style="top:247px"></div>
  <div class="lbl" style="left:507px;top:249px">最低</div>
  <div class="box" style="top:265px;color:#00bfff"><span>93.7 MB/s</span></div>
  <div class="lbl" style="left:507px;top:279.500px">最高</div>
  <div class="box" style="top:295px;color:#00bfff"><span>231.0 MB/s</span></div>
  <div class="lbl" style="left:507px;top:308px">平均</div>
  <div class="box" style="top:323px;color:#00bfff"><span>227.5 MB/s</span></div>
  <div class="sep" style="top:343px"></div>
  <div class="chk" style="top:349px"></div>
  <svg class="abs" style="left:509px;top:351px" width="10" height="10" viewBox="0 0 10 10"><path d="M1 4.500l2.200 3.800L8.500.8" fill="none" stroke="#2a40a0" stroke-width="1.600" stroke-linejoin="round"/></svg>
  <div class="lbl" style="left:523px;top:349px">存取时间</div>
  <div class="box" style="top:364px;color:#ffff00"><span>0.454 ms</span></div>
  <div class="chk" style="top:380px"></div>
  <svg class="abs" style="left:509px;top:382px" width="10" height="10" viewBox="0 0 10 10"><path d="M1 4.500l2.200 3.800L8.500.8" fill="none" stroke="#2a40a0" stroke-width="1.600" stroke-linejoin="round"/></svg>
  <div class="lbl" style="left:523px;top:380px">突发传输速率</div>
  <div class="box" style="top:395px;color:#fff"><span>204.3 MB/s</span></div>
  <div class="lbl" style="left:507px;top:410px"><span style="font-family:'IPAGothic','Liberation Mono',monospace">CPU </span>占用率</div>
  <div class="box" style="top:425px;color:#fff"><span>13.9%</span></div>
 </div>
</div>
</body>
</html>
